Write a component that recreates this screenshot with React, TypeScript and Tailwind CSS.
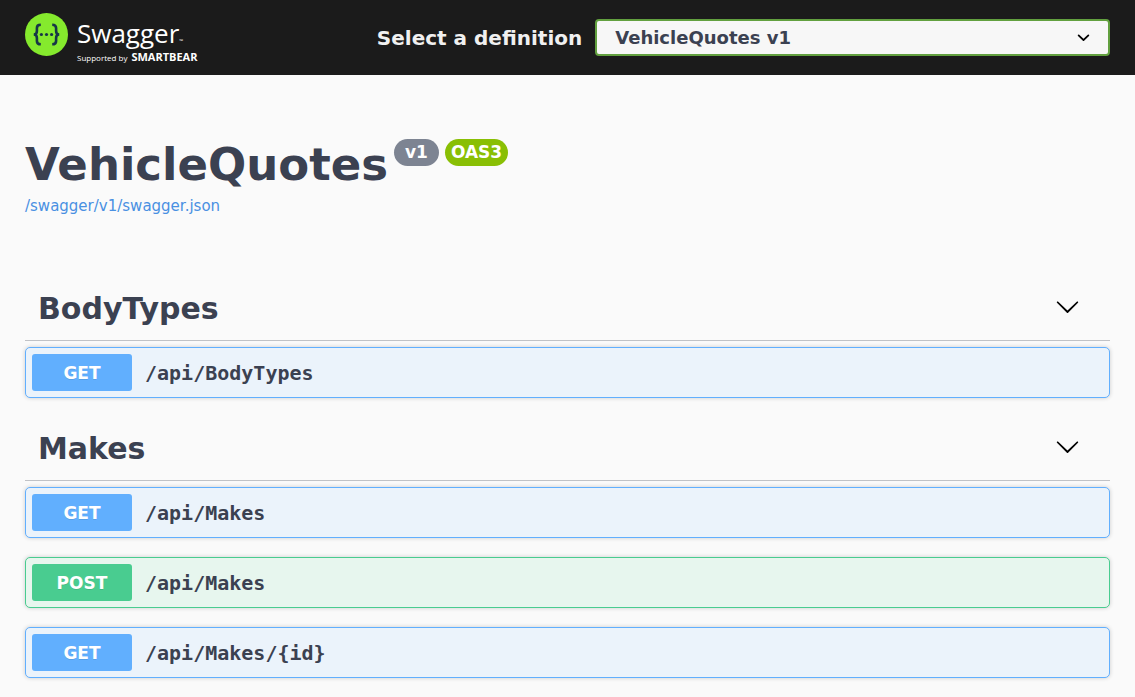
type Method = "GET" | "POST";

interface Operation {
  method: Method;
  path: string;
}

interface Section {
  name: string;
  operations: Operation[];
}

const sections: Section[] = [
  { name: "BodyTypes", operations: [{ method: "GET", path: "/api/BodyTypes" }] },
  {
    name: "Makes",
    operations: [
      { method: "GET", path: "/api/Makes" },
      { method: "POST", path: "/api/Makes" },
      { method: "GET", path: "/api/Makes/{id}" },
    ],
  },
];

const rowColors: Record<Method, string> = {
  GET: "border-[#61affe] bg-[#ebf3fb]",
  POST: "border-[#49cc90] bg-[#e7f6ee]",
};

const badgeColors: Record<Method, string> = {
  GET: "bg-[#61affe]",
  POST: "bg-[#49cc90]",
};

function LogoMark() {
  return (
    <svg viewBox="0 0 43 43" className="mt-0.5 size-[43px] shrink-0" aria-hidden="true">
      <circle cx="21.5" cy="21.5" r="21.5" fill="#85ea2d" />
      <g fill="none" stroke="#173647" strokeWidth="2.6">
        <path d="M15.8 11.7c-3 0-3.9 1-3.9 3.4v2.8c0 2.3-.8 3.5-3.1 3.6 2.3.1 3.1 1.3 3.1 3.6v2.8c0 2.4.9 3.4 3.9 3.4" />
        <path d="M27.2 11.7c3 0 3.9 1 3.9 3.4v2.8c0 2.3.8 3.5 3.1 3.6-2.3.1-3.1 1.3-3.1 3.6v2.8c0 2.4-.9 3.4-3.9 3.4" />
      </g>
      <g fill="#173647">
        <circle cx="16.4" cy="21.5" r="1.6" />
        <circle cx="21.5" cy="21.5" r="1.6" />
        <circle cx="26.6" cy="21.5" r="1.6" />
      </g>
    </svg>
  );
}

function Logo() {
  return (
    <a href="#" className="flex items-start gap-[9px] font-['Open_Sans',sans-serif] text-white">
      <LogoMark />
      <span className="flex flex-col pt-1">
        <span className="flex items-end text-[26px] leading-9">
          Swagger
          <span className="text-[5px] leading-5">™</span>
        </span>
        <span className="flex items-baseline gap-1 leading-3 whitespace-nowrap">
          <span className="text-[8px]">Supported by</span>
          <span className="text-[11px] font-bold">SMARTBEAR</span>
        </span>
      </span>
    </a>
  );
}

function TopBar() {
  return (
    <header className="flex items-center bg-[#1b1b1b] px-[25px] py-[11px]">
      <div className="flex-1">
        <Logo />
      </div>
      <form className="flex flex-[3] items-center gap-[13px]">
        <label
          htmlFor="definition"
          className="flex-[5] text-right text-xl font-bold whitespace-nowrap text-[#f0f0f0]"
        >
          Select a definition
        </label>
        <div className="relative flex-[9]">
          <select
            id="definition"
            className="block h-[37px] w-full appearance-none rounded border-2 border-[#62a03f] bg-[#f7f7f7] pr-12 pl-[18px] text-lg leading-6 font-bold text-[#3b4151]"
          >
            <option>VehicleQuotes v1</option>
          </select>
          <svg
            viewBox="0 0 20 20"
            className="pointer-events-none absolute top-1.5 right-3.5 size-[25px]"
            aria-hidden="true"
          >
            <path d="M13.418 7.859a.695.695 0 01.978 0 .68.68 0 010 .969l-3.908 3.83a.697.697 0 01-.979 0l-3.908-3.83a.68.68 0 010-.969.695.695 0 01.978 0L10 11l3.418-3.141z" />
          </svg>
        </div>
      </form>
    </header>
  );
}

function OperationRow({ method, path }: Operation) {
  return (
    <button
      type="button"
      className={`flex items-center gap-[13px] rounded-[5px] border p-1.5 text-left shadow-[0_0_4px_rgba(0,0,0,0.19)] ${rowColors[method]}`}
    >
      <span
        className={`w-[100px] rounded-[3px] pt-px text-center text-[17px] leading-9 font-bold text-white [text-shadow:0_1px_0_rgba(0,0,0,0.1)] ${badgeColors[method]}`}
      >
        {method}
      </span>
      <span className="font-['DejaVu_Sans_Mono',monospace] text-xl font-bold">{path}</span>
    </button>
  );
}

function TagSection({ name, operations }: Section) {
  return (
    <section className="flex flex-col gap-1.5">
      <h2 className="border-b border-[#3b4151]/30">
        <button
          type="button"
          className="flex w-full items-center justify-between pt-[7px] pr-[30px] pb-1.5 pl-[13px] text-left text-[30px] leading-[50px] font-bold"
        >
          {name}
          <svg viewBox="0 0 20 20" className="mb-1.5 size-[25px]" fill="#000" aria-hidden="true">
            <path d="M17.418 6.109c.272-.268.709-.268.979 0s.271.701 0 .969l-7.908 7.83c-.27.268-.707.268-.979 0l-7.908-7.83c-.27-.268-.27-.701 0-.969.271-.268.709-.268.979 0L10 13.25l7.418-7.141z" />
          </svg>
        </button>
      </h2>
      <div className="flex flex-col gap-[19px]">
        {operations.map((op) => (
          <OperationRow key={op.method + op.path} {...op} />
        ))}
      </div>
    </section>
  );
}

export default function App() {
  return (
    <div className="min-h-screen bg-[#fafafa] font-['DejaVu_Sans',sans-serif] text-[#3b4151]">
      <TopBar />
      <main className="px-[25px] pb-4">
        <div className="pt-16 pb-14">
          <div className="flex items-start gap-1.5">
            <h1 className="text-[45px] leading-[52px] font-bold">VehicleQuotes</h1>
            <span className="rounded-full bg-[#7d8492] px-[11px] text-[17px] leading-[27px] font-bold text-white">
              v1
            </span>
            <span className="rounded-full bg-[#89bf04] px-1.5 text-[17px] leading-[27px] font-bold text-white">
              OAS3
            </span>
          </div>
          <a href="/swagger/v1/swagger.json" className="block text-[15px] leading-[30px] text-[#4990e2]">
            /swagger/v1/swagger.json
          </a>
        </div>
        <div className="flex flex-col gap-[19px]">
          {sections.map((section) => (
            <TagSection key={section.name} {...section} />
          ))}
        </div>
      </main>
    </div>
  );
}
